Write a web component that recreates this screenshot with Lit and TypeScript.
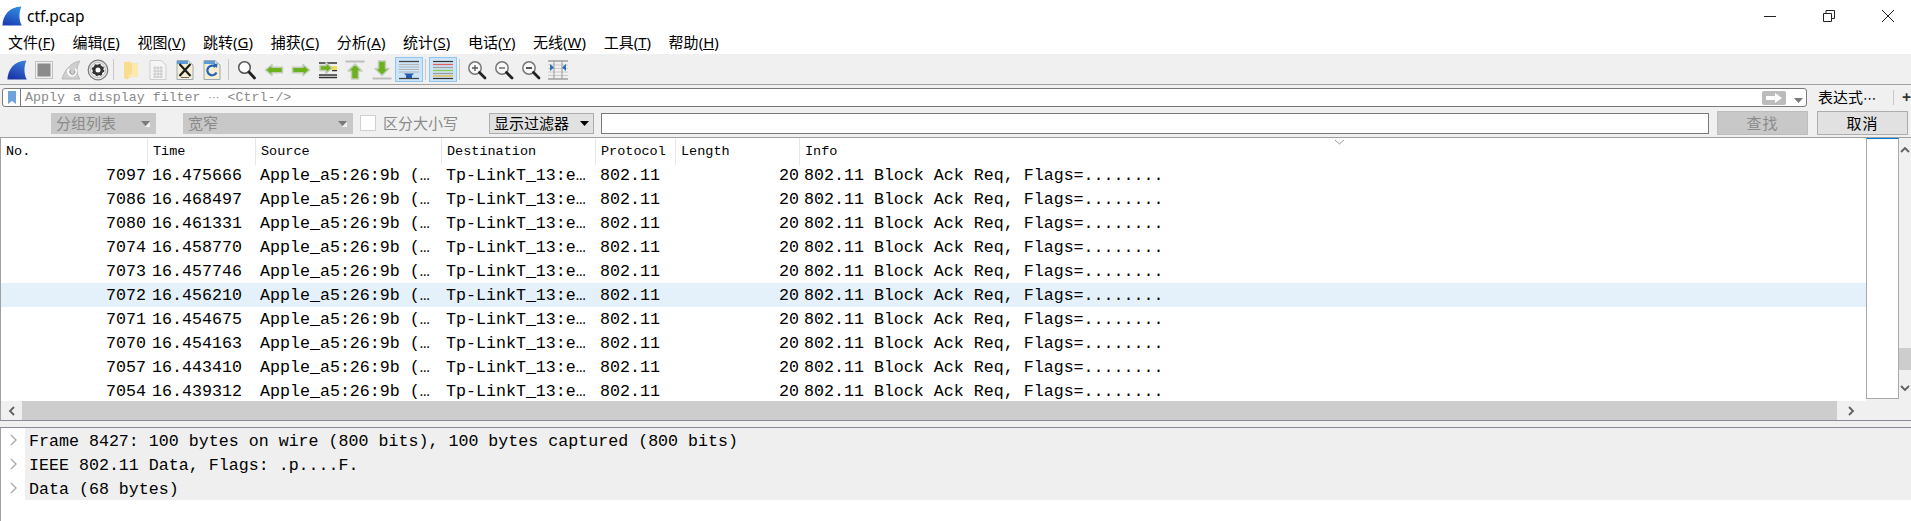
import { LitElement, html, svg, css } from "lit";
import { customElement } from "lit/decorators.js";

const ROWS = [
  ["7097", "16.475666"], ["7086", "16.468497"], ["7080", "16.461331"], ["7074", "16.458770"], ["7073", "16.457746"],
  ["7072", "16.456210"], ["7071", "16.454675"], ["7070", "16.454163"], ["7057", "16.443410"], ["7054", "16.439312"],
];
const MENUS = [["文件", "F"], ["编辑", "E"], ["视图", "V"], ["跳转", "G"], ["捕获", "C"], ["分析", "A"], ["统计", "S"], ["电话", "Y"], ["无线", "W"], ["工具", "T"], ["帮助", "H"]];
const HEADS = ["No.", "Time", "Source", "Destination", "Protocol", "Length", "Info"];

const fin = (id: string, size: number, top: string, bottom: string) => html`
  <svg width=${size} height=${size} viewBox="0 0 20 20">
    <defs><linearGradient id=${id} x1="0.75" y1="0" x2="0.35" y2="1"><stop offset="0" stop-color=${top}></stop><stop offset="1" stop-color=${bottom}></stop></linearGradient></defs>
    <path d="M0.4 19.600C1 9 7 1 19.400 0.400C17 6 16.500 13 19.800 19.600Z" fill="url(#${id})"></path>
  </svg>`;
const arrow = (d: string) => svg`<path d=${d} fill="#6cb21c" stroke="#c3ccb8" stroke-width="1.500" stroke-linejoin="round"></path>`;
const glass = (inner: unknown) => html`
  <svg width="20" height="20" viewBox="0 0 20 20">
    <circle cx="8" cy="8" r="6.200" fill="#f8f8f8" stroke="#777" stroke-width="1.500"></circle>
    <path d="M12.500 12.500L18 18" stroke="#222" stroke-width="2.800" stroke-linecap="round"></path>
    ${inner}
  </svg>`;

const ICONS = {
  stop: html`<svg width="20" height="20" viewBox="0 0 20 20"><rect x="1.500" y="1.500" width="17" height="17" fill="#efefef" stroke="#c2c2c2"></rect><rect x="3.500" y="3.500" width="13" height="13" fill="#8b8b8b"></rect></svg>`,
  restart: html`<svg width="20" height="20" viewBox="0 0 20 20"><path d="M1 19C3 12 8 3 19 1C15.500 6 14.500 13 19 19Z" fill="#cfcfcf" stroke="#b8b8b8"></path><path d="M8 9A4 4 0 1 0 14 9" fill="none" stroke="#fff" stroke-width="2"></path><path d="M10 10A2.500 2.500 0 1 0 13 10" fill="none" stroke="#999"></path></svg>`,
  options: html`<svg width="22" height="22" viewBox="0 0 22 22"><circle cx="11" cy="11" r="9.800" fill="#e8e8e8" stroke="#777" stroke-width="1.200"></circle><circle cx="11" cy="11" r="7.500" fill="#fff" stroke="#bbb"></circle><circle cx="11" cy="11" r="4" fill="none" stroke="#333" stroke-width="3"></circle><circle cx="11" cy="11" r="5.600" fill="none" stroke="#333" stroke-width="1.500" stroke-dasharray="2 2.400"></circle></svg>`,
  open: html`<svg width="16" height="20" viewBox="0 0 16 20"><path d="M1 2L7 1.500L9 3.500H15V16.500L8.500 16.500L4 19.500L1 18Z" fill="#f8dd8f"></path><path d="M9 4H15V16.500H4L9 13Z" fill="#fbe9ad"></path></svg>`,
  save: html`<svg width="18" height="20" viewBox="0 0 18 20"><path d="M1 0.500H12L17 5V19.500H1Z" fill="#f5f5f5" stroke="#cfcfcf"></path><path d="M4 8H14M4 11H14M4 14H14M4 17H14M6 6V18M9 6V18M12 6V18" stroke="#c7c7c7"></path></svg>`,
  close: html`<svg width="18" height="20" viewBox="0 0 18 20"><path d="M1 0.500H12L17 5V19.500H1Z" fill="#f6eed2" stroke="#9aa9b5"></path><path d="M1 1H12V4H1Z" fill="#5b9bd6"></path><path d="M3.500 4L14.500 16M14.500 4L3.500 16" stroke="#1c1c1c" stroke-width="2.200"></path><path d="M5 17.500H13" stroke="#666"></path></svg>`,
  reload: html`<svg width="18" height="20" viewBox="0 0 18 20"><path d="M1 0.500H12L17 5V19.500H1Z" fill="#f6eed2" stroke="#9aa9b5"></path><path d="M1 1H12V4H1Z" fill="#5b9bd6"></path><path d="M12.500 7A4.800 4.800 0 1 0 13.500 12.500" fill="none" stroke="#2464b4" stroke-width="2.200"></path><path d="M10 4L14.500 3.500L14 8Z" fill="#2464b4"></path></svg>`,
  find: html`<svg width="20" height="20" viewBox="0 0 20 20"><circle cx="7.500" cy="7.500" r="5.800" fill="#fff" stroke="#555" stroke-width="1.500"></circle><path d="M12 12L17.500 18" stroke="#222" stroke-width="2.800" stroke-linecap="round"></path></svg>`,
  back: html`<svg width="20" height="14" viewBox="0 0 20 14">${arrow("M1.500 7L8 1.500V4.200H18.500V9.800H8V12.500Z")}</svg>`,
  forward: html`<svg width="20" height="14" viewBox="0 0 20 14">${arrow("M18.500 7L12 1.500V4.200H1.500V9.800H12V12.500Z")}</svg>`,
  goto: html`<svg width="20" height="20" viewBox="0 0 20 20"><path d="M1 3H19M12 7H19M14 10.500H19M1 15H19M1 17.500H19" stroke="#333" stroke-width="1.300"></path><rect x="13" y="6" width="6" height="4" fill="#f2dc55"></rect>${arrow("M14 8L8 2.500V5.500H2V10.500H8V13.500Z")}</svg>`,
  top: html`<svg width="20" height="20" viewBox="0 0 20 20"><rect x="0.500" y="0.500" width="19" height="2" fill="#bdbdbd"></rect>${arrow("M10 4L17 11H13.500V19H6.500V11H3Z")}</svg>`,
  bottom: html`<svg width="20" height="20" viewBox="0 0 20 20">${arrow("M10 15.500L17 8.500H13.500V1H6.500V8.500H3Z")}<rect x="0.500" y="17.500" width="19" height="2" fill="#bdbdbd"></rect></svg>`,
  scroll: html`<svg width="22" height="20" viewBox="0 0 22 20"><path d="M1 1.500H21" stroke="#444" stroke-width="1.300"></path><path d="M1 4.500H21M1 7H21M1 9.500H21M1 12H21" stroke="#b5b5b5"></path><path d="M1 18.500H21" stroke="#444" stroke-width="1.300"></path><path d="M6 13.500H16L13.500 16H14V18H8V16H8.500Z" fill="#2457b0"></path></svg>`,
  color: html`<svg width="20" height="20" viewBox="0 0 20 20"><path d="M0 1.500H20" stroke="#333" stroke-width="1.200"></path><path d="M0 4.500H20" stroke="#e06060" stroke-width="1.300"></path><path d="M0 7.500H20" stroke="#a0a0a0" stroke-width="1.300"></path><path d="M0 10.500H20" stroke="#8fc94c" stroke-width="1.300"></path><path d="M0 13.500H20" stroke="#999" stroke-width="1.300"></path><path d="M0 16H20" stroke="#e0b83c" stroke-width="1.300"></path><path d="M0 18.500H20" stroke="#333" stroke-width="1.200"></path></svg>`,
  zin: glass(svg`<path d="M5 8H11M8 5V11" stroke="#555" stroke-width="1.300"></path>`),
  zout: glass(svg`<path d="M5 8H11" stroke="#555" stroke-width="1.300"></path>`),
  zreset: glass(svg`<path d="M5 8H11" stroke="#555" stroke-width="2"></path>`),
  resize: html`<svg width="20" height="20" viewBox="0 0 20 20"><path d="M0 1H20M0 19H20" stroke="#777" stroke-width="1.200"></path><path d="M0 5H20M0 8.500H20M0 12H20M0 15.500H20" stroke="#ccc"></path><path d="M6 1V19M14 1V19" stroke="#999"></path><path d="M2 4L6 7.500L2 11ZM18 4L14 7.500L18 11Z" fill="#2f6fb8"></path></svg>`,
};

@customElement("app-root")
export class AppRoot extends LitElement {
  static styles = css`
    :host { display: block; width: 1911px; height: 521px; overflow: hidden; background: #f0f0f0; font-family: "Noto Sans", "Noto Sans CJK SC", sans-serif; color: #000; }
    .title { height: 32px; background: #fff; display: flex; align-items: center; padding-left: 2px; }
    .title .name { margin-left: 5px; font-size: 15.500px; }
    .win { margin-left: auto; display: flex; align-items: center; padding-right: 17px; gap: 47px; }
    .menu { height: 23px; box-sizing: border-box; padding-bottom: 3px; background: #fff; display: flex; align-items: center; padding-left: 8px; font-size: 15px; gap: 17.600px; border-bottom: 1px solid #f0f0f0; }
    .menu span { white-space: nowrap; }
    .tools { height: 29px; display: flex; align-items: center; padding-left: 3px; border-bottom: 1px solid #a0a0a0; background: #f0f0f0; }
    .ic { width: 27px; height: 25px; display: flex; align-items: center; justify-content: center; flex: none; box-sizing: border-box; }
    .ic.on { background: #cce4f7; border: 1px solid #8fc6f2; width: 28px; margin-right: -1px; }
    .sep { width: 1px; height: 21px; background: #c8c8c8; flex: none; margin: 0 3px; }
    .sep.a { margin: 0 3px 0 2px; }
    .sep.b { margin: 0 4px 0 3px; }
    .filter { height: 25px; box-sizing: border-box; padding: 3px 4px 3px 2px; display: flex; align-items: flex-start; background: #f0f0f0; }
    .fi { width: 1805px; height: 19px; box-sizing: border-box; background: #fff; border: 1px solid #7a7a7a; border-radius: 3px; display: flex; align-items: center; flex: none; }
    .mark { width: 17px; height: 17px; border-right: 1px solid #7a7a7a; flex: none; display: flex; align-items: center; justify-content: center; }
    .ph { margin-left: 4px; font: 13.300px "Liberation Mono", monospace; color: #8a8a8a; white-space: pre; }
    .ph i { font: 11px "DejaVu Sans", sans-serif; }
    .go { margin-left: auto; width: 24px; height: 14px; background: #bcbcbc; border-radius: 2px; display: flex; align-items: center; justify-content: center; }
    .dd { margin: 0 3px 0 8px; }
    .expr { margin-left: 11px; font-size: 15px; white-space: nowrap; width: 75px; flex: none; line-height: 19px; }
    .expr i { font: 13px "DejaVu Sans", sans-serif; }
    .vsep { width: 1px; height: 15px; background: #c8c8c8; flex: none; margin: 2px 0 0; }
    .plus { margin-left: 8px; font-size: 16px; font-weight: 700; line-height: 19px; color: #333; }
    .find { height: 27px; box-sizing: border-box; padding-top: 3px; display: flex; align-items: flex-start; font-size: 15px; background: #f0f0f0; }
    .combo { height: 21px; box-sizing: border-box; background: #c8c8c8; color: #8a8a8a; display: flex; align-items: center; padding: 0 6px 0 5px; justify-content: space-between; flex: none; line-height: 1; }
    .c1 { margin-left: 51px; width: 105px; }
    .c2 { margin-left: 27px; width: 170px; }
    .cb { margin-left: 7px; margin-top: 2px; width: 16px; height: 16px; box-sizing: border-box; border: 1px solid #cfcfcf; background: #fff; flex: none; }
    .cl { margin-left: 7px; color: #8a8a8a; font-size: 15px; line-height: 20px; white-space: nowrap; width: 106px; flex: none; }
    .c3 { width: 105px; background: #e1e1e1; color: #000; border: 1px solid #adadad; padding: 0 4px; }
    .txt { margin-left: 7px; width: 1108px; height: 21px; box-sizing: border-box; background: #fff; border: 1px solid #7a7a7a; flex: none; margin-right: 8px; }
    .txt + .btn { margin-top: -2px; }
    .btn { width: 91px; height: 24px; box-sizing: border-box; display: flex; align-items: center; justify-content: center; flex: none; line-height: 1; border: 1px solid #bdbdbd; background: #c8c8c8; color: #8a8a8a; letter-spacing: 1px; }
    .btn.ok { margin-left: 9px; margin-top: -2px; background: #e1e1e1; color: #000; border-color: #adadad; }
    .packets { height: 284px; box-sizing: border-box; border-top: 1px solid #a0a0a0; border-left: 1px solid #a0a0a0; border-bottom: 1px solid #8a8a96; display: flex; flex-direction: column; position: relative; }
    .main { height: 263px; display: flex; flex: none; }
    .list { width: 1865px; flex: none; background: #fff; overflow: hidden; font: 16.650px/26px "Liberation Mono", monospace; }
    .head, .row { display: grid; grid-template-columns: 147px 108px 186px 154px 80px 124px 1fr; white-space: pre; }
    .head { height: 25px; font-size: 13.500px; line-height: 27px; }
    .head span { padding-left: 5px; border-right: 1px solid #e6e6e6; }
    .head span:last-child { border-right: 0; }
    .row { height: 24px; }
    .row.sel { background: #e4f1fb; }
    .row .num { text-align: right; padding-right: 2px; }
    .row .t { padding-left: 4px; }
    .row .end { text-align: right; padding-right: 1px; }
    .sort { position: absolute; left: 1333px; top: 1px; }
    .mini { width: 33px; height: 261px; box-sizing: border-box; background: #fff; border: 1px solid #aaa; border-top: 1px solid #0078d7; flex: none; }
    .vs { width: 12px; background: #f0f0f0; display: flex; flex-direction: column; align-items: center; padding-top: 8px; box-sizing: border-box; position: relative; flex: none; }
    .thumb { width: 12px; height: 22px; background: #cdcdcd; margin-top: 195px; flex: none; }
    .vs .dn { margin-top: 15px; }
    .hs { height: 19px; display: flex; align-items: center; background: #f0f0f0; }
    .hs .l { width: 21px; display: flex; justify-content: center; flex: none; }
    .hs .th { width: 1815px; height: 19px; background: #cdcdcd; flex: none; }
    .hs .r { width: 29px; display: flex; justify-content: center; flex: none; }
    .gap { height: 6px; border-bottom: 1px solid #8a8a96; }
    .details { height: 93px; box-sizing: border-box; border-left: 1px solid #a0a0a0; background: #fff; font: 16.650px/28px "Liberation Mono", monospace; }
    .d { height: 24px; display: flex; background: #efefef; }
    .d .cv { width: 24px; flex: none; background: #fff; display: flex; align-items: center; padding-left: 9px; box-sizing: border-box; }
    .d .x { padding-left: 4px; white-space: pre; }
  `;

  render() {
    const chevR = html`<svg width="7" height="12" viewBox="0 0 7 12"><path d="M1 1L6 6L1 11" fill="none" stroke="#a8a8a8" stroke-width="1.300"></path></svg>`;
    const tri = (c: string) => html`<svg width="9" height="6" viewBox="0 0 9 6"><path d="M0 0H9L4.500 5Z" fill=${c}></path></svg>`;
    const tg = html`<svg width="9" height="6" viewBox="0 0 9 6"><path d="M0 0H9L4.500 5Z" fill="#7a7a7a"></path><path d="M9 1V6H4Z" fill="#fff" opacity=".7"></path></svg>`;
    return html`
      <div class="title">
        ${fin("g0", 20, "#2e8fe0", "#1d3fb4")}
        <span class="name">ctf.pcap</span>
        <div class="win">
          <svg width="12" height="12" viewBox="0 0 12 12"><path d="M0 6.500H12" stroke="#222"></path></svg>
          <svg width="12" height="12" viewBox="0 0 12 12"><path d="M0.500 3.500H8.500V11.500H0.500ZM3 3.500V0.500H11.500V8.500H8.500" fill="none" stroke="#222"></path></svg>
          <svg width="12" height="12" viewBox="0 0 12 12"><path d="M0 0L12 12M12 0L0 12" stroke="#222"></path></svg>
        </div>
      </div>
      <div class="menu">${MENUS.map(([a, k]) => html`<span>${a}(<u>${k}</u>)</span>`)}</div>
      <div class="tools">
        <div class="ic">${fin("g1", 20, "#3a7fdc", "#1c34a8")}</div>
        <div class="ic">${ICONS.stop}</div>
        <div class="ic">${ICONS.restart}</div>
        <div class="ic">${ICONS.options}</div>
        <div class="sep a"></div>
        <div class="ic">${ICONS.open}</div>
        <div class="ic">${ICONS.save}</div>
        <div class="ic">${ICONS.close}</div>
        <div class="ic">${ICONS.reload}</div>
        <div class="sep b"></div>
        <div class="ic">${ICONS.find}</div>
        <div class="ic">${ICONS.back}</div>
        <div class="ic">${ICONS.forward}</div>
        <div class="ic">${ICONS.goto}</div>
        <div class="ic">${ICONS.top}</div>
        <div class="ic">${ICONS.bottom}</div>
        <div class="ic on">${ICONS.scroll}</div>
        <div class="sep"></div>
        <div class="ic on">${ICONS.color}</div>
        <div class="sep"></div>
        <div class="ic">${ICONS.zin}</div>
        <div class="ic">${ICONS.zout}</div>
        <div class="ic">${ICONS.zreset}</div>
        <div class="ic">${ICONS.resize}</div>
      </div>
      <div class="filter">
        <div class="fi">
          <div class="mark"><svg width="8" height="13" viewBox="0 0 8 13"><path d="M0 0H8V13L4 10L0 13Z" fill="#6fa3dc"></path></svg></div>
          <span class="ph">Apply a display filter <i>⋯</i> &lt;Ctrl-/&gt;</span>
          <div class="go"><svg width="16" height="10" viewBox="0 0 16 10"><path d="M0 3H9V0L16 5L9 10V7H0Z" fill="#fff"></path></svg></div>
          <div class="dd">${tg}</div>
        </div>
        <span class="expr">表达式<i>⋯</i></span>
        <div class="vsep"></div>
        <span class="plus">+</span>
      </div>
      <div class="find">
        <div class="combo c1"><span>分组列表</span>${tg}</div>
        <div class="combo c2"><span>宽窄</span>${tg}</div>
        <div class="cb"></div>
        <span class="cl">区分大小写</span>
        <div class="combo c3"><span>显示过滤器</span>${tri("#000")}</div>
        <div class="txt"></div>
        <div class="btn">查找</div>
        <div class="btn ok">取消</div>
      </div>
      <div class="packets">
        <svg class="sort" width="11" height="6" viewBox="0 0 11 6"><path d="M1 1L5.500 5L10 1" fill="none" stroke="#999"></path></svg>
        <div class="main">
          <div class="list">
            <div class="head">${HEADS.map((h) => html`<span>${h}</span>`)}</div>
            ${ROWS.map(([n, t], i) => html`<div class="row ${i === 5 ? "sel" : ""}"><span class="num">${n}</span><span class="t">${t}</span><span class="t">Apple_a5:26:9b (…</span><span class="t">Tp-LinkT_13:e…</span><span class="t">802.11</span><span class="end">20</span><span class="t">802.11 Block Ack Req, Flags=........</span></div>`)}
          </div>
          <div class="mini"></div>
          <div class="vs">
            <svg width="10" height="7" viewBox="0 0 10 7"><path d="M1 6L5 2L9 6" fill="none" stroke="#606060" stroke-width="1.800"></path></svg>
            <div class="thumb"></div>
            <svg class="dn" width="10" height="7" viewBox="0 0 10 7"><path d="M1 1L5 5L9 1" fill="none" stroke="#606060" stroke-width="1.800"></path></svg>
          </div>
        </div>
        <div class="hs">
          <div class="l"><svg width="7" height="10" viewBox="0 0 7 10"><path d="M6 1L2 5L6 9" fill="none" stroke="#606060" stroke-width="1.800"></path></svg></div>
          <div class="th"></div>
          <div class="r"><svg width="7" height="10" viewBox="0 0 7 10"><path d="M1 1L5 5L1 9" fill="none" stroke="#606060" stroke-width="1.800"></path></svg></div>
        </div>
      </div>
      <div class="gap"></div>
      <div class="details">
        <div class="d"><div class="cv">${chevR}</div><span class="x">Frame 8427: 100 bytes on wire (800 bits), 100 bytes captured (800 bits)</span></div>
        <div class="d"><div class="cv">${chevR}</div><span class="x">IEEE 802.11 Data, Flags: .p....F.</span></div>
        <div class="d"><div class="cv">${chevR}</div><span class="x">Data (68 bytes)</span></div>
      </div>
    `;
  }
}
